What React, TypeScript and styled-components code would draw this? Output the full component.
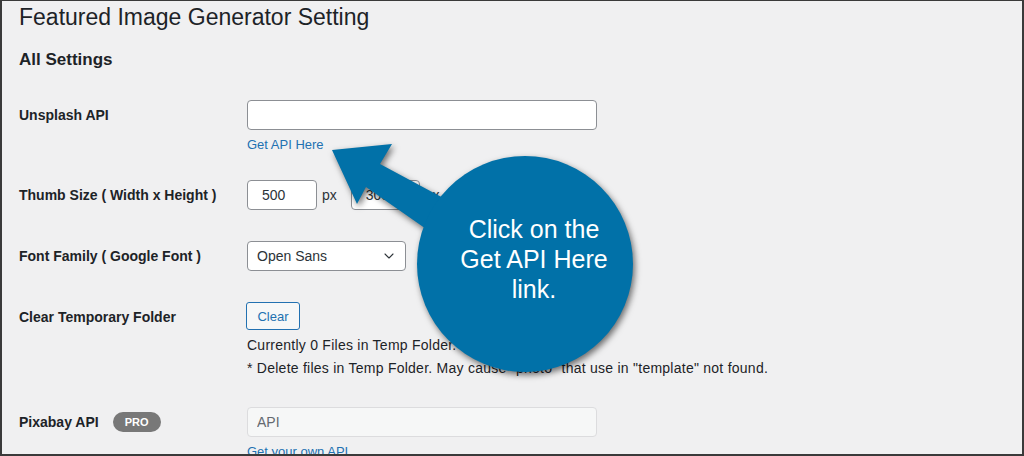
import React from "react";
import styled, { createGlobalStyle } from "styled-components";
import { ChevronDown } from "lucide-react";

const Global = createGlobalStyle`
    html, body { margin: 0; padding: 0; background: #f0f0f1; }
    * { box-sizing: border-box; }
`;

export default function App ()
{
    return (
        <>
            <Global/>
            <Frame>
                <Title>Featured Image Generator Setting</Title>
                <Section>All Settings</Section>

                <Row>
                    <Label>Unsplash API</Label>
                    <Field>
                        <TextInput $width={350} defaultValue=""/>
                        <Link $tight>Get API Here</Link>
                    </Field>
                </Row>

                <Row>
                    <Label>Thumb Size ( Width x Height )</Label>
                    <Field>
                        <Inline>
                            <TextInput $width={70} $pad={14} defaultValue="500"/>
                            <Unit>px</Unit>
                            <TextInput $width={69} $pad={14} defaultValue="300"/>
                            <Unit>px</Unit>
                        </Inline>
                    </Field>
                </Row>

                <Row>
                    <Label>Font Family ( Google Font )</Label>
                    <Field>
                        <SelectBox>
                            <span>Open Sans</span>
                            <ChevronDown size={16} strokeWidth={1.6}/>
                        </SelectBox>
                    </Field>
                </Row>

                <Row>
                    <Label>Clear Temporary Folder</Label>
                    <Field>
                        <ClearButton>Clear</ClearButton>
                        <Note $first>Currently 0 Files in Temp Folder.</Note>
                        <Note $last>* Delete files in Temp Folder. May cause "photo" that use in "template" not found.</Note>
                    </Field>
                </Row>

                <Row>
                    <Label>
                        Pixabay API
                        <ProBadge>PRO</ProBadge>
                    </Label>
                    <Field>
                        <TextInput $width={350} $disabled placeholder="API" disabled/>
                        <Link>Get your own API</Link>
                    </Field>
                </Row>

                <Callout>
                    <svg width="1024" height="456" viewBox="0 0 1024 456">
                        <g fill="#0171a8">
                            <polygon points="332,150 392,144 380,164 488,222 462,254 366,187 357,204"/>
                            <circle cx="525" cy="264" r="108"/>
                        </g>
                    </svg>
                    <CalloutText>Click on the<br/>Get API Here<br/>link.</CalloutText>
                </Callout>
            </Frame>
        </>
    );
}

/*
|--------------------------------------------------------------------------
| Styled
|--------------------------------------------------------------------------
*/

const Frame = styled.div`
    position: relative;
    width: 1024px;
    height: 456px;
    overflow: hidden;
    background: #f0f0f1;
    border: 2px solid #3a3a3a;
    border-top-width: 1px;
    font-family: "Liberation Sans", Arial, sans-serif;
    color: #1d2327;
`;

const Title = styled.h1`
    margin: 0;
    padding: 2px 0 0 17px;
    font-size: 23px;
    line-height: 29px;
    font-weight: 400;
`;

const Section = styled.h2`
    margin: 0 0 14px;
    padding: 17px 0 0 17px;
    font-size: 17px;
    line-height: 22px;
    font-weight: 700;
`;

const Row = styled.div`
    display: grid;
    grid-template-columns: 228px 1fr;
    padding-left: 17px;
`;

const Label = styled.div`
    display: flex;
    align-items: center;
    gap: 14px;
    align-self: start;
    padding-top: 21px;
    height: 39px;
    font-size: 14px;
    line-height: 18px;
    font-weight: 700;
`;

const Field = styled.div`
    display: flex;
    flex-direction: column;
    align-items: flex-start;
    padding: 15px 0 16px;
`;

const Inline = styled.div`
    display: flex;
    align-items: center;
`;

const TextInput = styled.input<{ $width: number; $pad?: number; $disabled?: boolean }>`
    width: ${p => p.$width}px;
    height: 30px;
    margin: 0;
    padding: 0 ${p => p.$pad ?? 9}px;
    border: 1px solid ${p => p.$disabled ? "#dcdcde" : "#8c8f94"};
    border-radius: 4px;
    background: ${p => p.$disabled ? "#f6f7f7" : "#fff"};
    font-family: inherit;
    font-size: 14px;
    color: #2c3338;
    outline: none;
    &::placeholder { color: #646970; }
`;

const Unit = styled.span`
    font-size: 14px;
    margin: 0 14px 0 5px;
    color: #2c3338;
`;

const SelectBox = styled.div`
    width: 159px;
    height: 30px;
    display: flex;
    align-items: center;
    justify-content: space-between;
    padding: 0 8px 0 9px;
    border: 1px solid #8c8f94;
    border-radius: 4px;
    background: #fff;
    font-size: 14px;
    color: #2c3338;
`;

const Link = styled.a<{ $tight?: boolean }>`
    margin: 6px 0 ${p => p.$tight ? "-5px" : "0"};
    font-size: 13px;
    line-height: 18px;
    color: #2271b1;
    cursor: pointer;
`;

const ClearButton = styled.button`
    width: 54px;
    height: 28px;
    margin-left: -1px;
    padding: 0;
    border: 1px solid #2271b1;
    border-radius: 3px;
    background: #f6f7f7;
    color: #2271b1;
    font-family: inherit;
    font-size: 13px;
`;

const Note = styled.p<{ $first?: boolean; $last?: boolean }>`
    margin: ${p => p.$first ? "6px" : "4px"} 0 ${p => p.$last ? "-2px" : "0"};
    font-size: 14px;
    line-height: 19px;
    letter-spacing: 0.25px;
    color: #1d2327;
`;

const ProBadge = styled.span`
    display: inline-flex;
    align-items: center;
    justify-content: center;
    width: 48px;
    height: 20px;
    border-radius: 10px;
    background: #787878;
    color: #fff;
    font-size: 11px;
    font-weight: 700;
`;

const Callout = styled.div`
    position: absolute;
    left: -2px;
    top: -1px;
    width: 1024px;
    height: 456px;
    pointer-events: none;
    svg { display: block; filter: drop-shadow(2px 3px 3px rgba(0, 0, 0, 0.55)); }
`;

const CalloutText = styled.div`
    position: absolute;
    left: 434px;
    top: 214px;
    width: 200px;
    text-align: center;
    color: #fff;
    font-size: 25px;
    line-height: 30px;
`;
